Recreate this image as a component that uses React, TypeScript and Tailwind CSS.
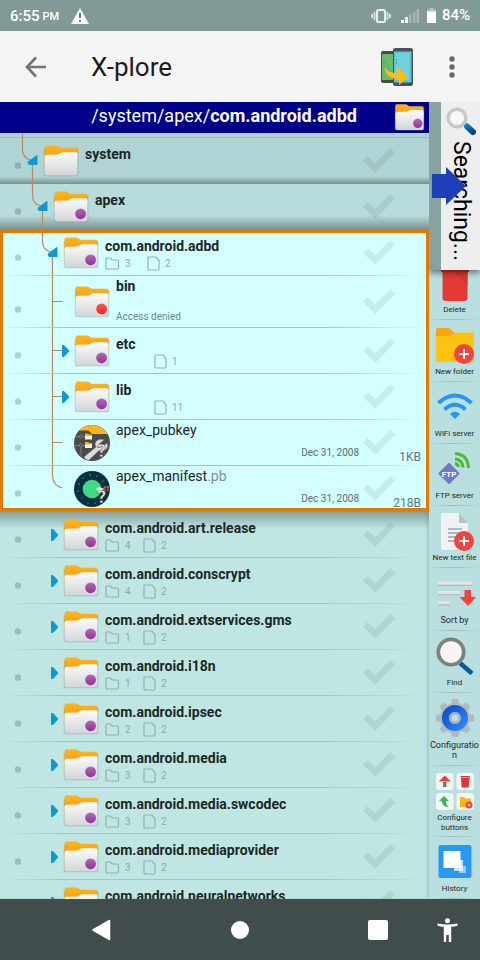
import type { ReactNode } from "react";

type Kind = "folder" | "folderDot" | "folderDenied" | "pubkey" | "manifest";
type Lane = "elbow" | "branch" | "leaf" | "last" | "collapsed";

interface Entry {
  name: string;
  ext?: string;
  kind: Kind;
  lane: Lane;
  level: 0 | 1 | 2 | 3;
  dirs?: number;
  files?: number;
  note?: string;
  date?: string;
  size?: string;
  tall?: boolean;
  opened?: boolean;
}

const LANE_WIDTH = [43, 53, 63, 74];
const WIRE = "#b58a68";
const BLUE = "#0a9bd0";

const parents: Entry[] = [
  { name: "system", kind: "folder", lane: "elbow", level: 0, opened: true },
  { name: "apex", kind: "folderDot", lane: "elbow", level: 1, opened: true },
];

const current: Entry[] = [
  { name: "com.android.adbd", kind: "folderDot", lane: "elbow", level: 2, dirs: 3, files: 2, opened: true },
  { name: "bin", kind: "folderDenied", lane: "leaf", level: 3, note: "Access denied", tall: true },
  { name: "etc", kind: "folderDot", lane: "branch", level: 3, files: 1 },
  { name: "lib", kind: "folderDot", lane: "branch", level: 3, files: 11 },
  { name: "apex_pubkey", kind: "pubkey", lane: "leaf", level: 3, date: "Dec 31, 2008", size: "1KB" },
  { name: "apex_manifest", ext: ".pb", kind: "manifest", lane: "last", level: 3, date: "Dec 31, 2008", size: "218B" },
];

const siblings: Entry[] = [
  ["com.android.art.release", 4],
  ["com.android.conscrypt", 4],
  ["com.android.extservices.gms", 1],
  ["com.android.i18n", 1],
  ["com.android.ipsec", 2],
  ["com.android.media", 3],
  ["com.android.media.swcodec", 3],
  ["com.android.mediaprovider", 3],
  ["com.android.neuralnetworks", 4],
].map(([name, dirs]) => ({
  name: name as string,
  dirs: dirs as number,
  files: 2,
  kind: "folderDot" as Kind,
  lane: "collapsed" as Lane,
  level: 2 as const,
}));

function Gradients() {
  return (
    <svg width="0" height="0" className="absolute" aria-hidden="true">
      <defs>
        <linearGradient id="tab" x1="0" y1="0" x2="0" y2="1">
          <stop offset="0" stopColor="#fdb515" />
          <stop offset="1" stopColor="#f8931f" />
        </linearGradient>
        <linearGradient id="paper" x1="0" y1="0" x2="0" y2="1">
          <stop offset="0" stopColor="#fbfbfb" />
          <stop offset="1" stopColor="#d3d5d7" />
        </linearGradient>
        <linearGradient id="purple" x1="0" y1="0" x2="0" y2="1">
          <stop offset="0" stopColor="#b868b4" />
          <stop offset="1" stopColor="#8e3299" />
        </linearGradient>
        <linearGradient id="red" x1="0" y1="0" x2="0" y2="1">
          <stop offset="0" stopColor="#ff5a55" />
          <stop offset="1" stopColor="#fb1d1d" />
        </linearGradient>
        <linearGradient id="handle" x1="0" y1="0" x2="1" y2="1">
          <stop offset="0" stopColor="#0d7cc0" />
          <stop offset="1" stopColor="#0a3f7c" />
        </linearGradient>
        <linearGradient id="gearBlue" x1="0" y1="0" x2="1" y2="1">
          <stop offset="0" stopColor="#0a4fd0" />
          <stop offset="1" stopColor="#2b86f5" />
        </linearGradient>
      </defs>
    </svg>
  );
}

function FolderIcon({ dot, className = "size-9" }: { dot?: "purple" | "red"; className?: string }) {
  return (
    <svg viewBox="0 0 36 36" className={`shrink-0 ${className}`} aria-hidden="true">
      <path d="M.8 6h34.500v25q0 2.300-2.300 2.300H3.200Q.8 33.300.8 31z" fill="#5d7f80" opacity=".4" />
      <path d="M1.500 4.500Q1.500 2.500 3.500 2.500H13q1.500 0 2.500 1T18 4.800H32.500Q34.500 4.800 34.500 6.800V20H1.500z" fill="url(#tab)" />
      <path d="M1.500 14q0-2.200 2.500-2.300l10.500-.3q1.500-.2 2.500-1.200t2.500-1H32.500q2 0 2 2V30.500q0 2-2 2h-29q-2 0-2-2z" fill="url(#paper)" />
      {dot && <circle cx="27.600" cy="24.800" r="5.400" fill={`url(#${dot})`} />}
    </svg>
  );
}

function Question() {
  return (
    <text x="27.500" y="31.500" fontFamily="Roboto, sans-serif" fontWeight="700" fontSize="18" textAnchor="middle" fill="#e8eaea" stroke="#444" strokeWidth=".5">
      ?
    </text>
  );
}

function PubkeyIcon() {
  return (
    <svg viewBox="0 0 36 36" className="size-9 shrink-0" aria-hidden="true">
      <circle cx="18" cy="18" r="18" fill="#4b4b4d" />
      <path d="M4.500 6A18 18 0 0 1 33.500 9H18L14.500 5.500H5z" fill="#fdb515" />
      <g fill="none" stroke="#8c8c8c" strokeWidth=".8">
        <circle cx="7" cy="11.500" r="1.600" />
        <circle cx="7" cy="20.500" r="1.600" />
        <path d="M1 11.500h4M9 11.500h3M1 20.500h4M9 20.500h3M7 23v8" />
      </g>
      <path d="M11 9h3l1 1h3v4.500h-7zM11 17.500h3l1 1h3V23h-7z" fill="#fdf3e0" />
      <path d="M11 8.500h3l1 1h3V11h-7zM11 17h3l1 1h3v1.500h-7z" fill="#fdb515" />
      <path d="M10 32 22 22q-2.500-5 2-7 3-1.500 6 0l-5 4 1.500 2.500 3-.5 3.500-3q2 5-2 7t-6 .5L14.500 35.500q-3-.5-4.500-3.500z" fill="#dcdcdc" stroke="#77797a" strokeWidth=".5" />
      <Question />
    </svg>
  );
}

function ManifestIcon() {
  return (
    <svg viewBox="0 0 36 36" className="size-9 shrink-0" aria-hidden="true">
      <circle cx="18" cy="18" r="18" fill="#0a3042" />
      <g fill="#b9d8da">
        <circle cx="9" cy="7" r=".5" /><circle cx="16" cy="4" r=".6" /><circle cx="23" cy="5" r=".5" />
        <circle cx="29" cy="10" r=".5" /><circle cx="5" cy="13" r=".6" /><circle cx="4" cy="20" r=".6" />
        <circle cx="8" cy="27" r=".5" /><circle cx="14" cy="32" r=".5" /><circle cx="21" cy="32" r=".5" />
      </g>
      <circle cx="18" cy="18" r="9.300" fill="#3ddc84" />
      <path d="M29.500 16.500l1.500-1v5M32.500 16.500l1.500-1v5" stroke="#f0592a" strokeWidth="1.200" fill="none" />
      <path d="M22 17.500q3-2 5-1 1 1 3 1-1 3-3.500 4-3-.5-4.500-4z" fill="#e8eaea" />
      <Question />
    </svg>
  );
}

function EntryIcon({ kind }: { kind: Kind }) {
  if (kind === "pubkey") return <PubkeyIcon />;
  if (kind === "manifest") return <ManifestIcon />;
  if (kind === "folder") return <FolderIcon />;
  return <FolderIcon dot={kind === "folderDenied" ? "red" : "purple"} />;
}

/* Left lane of a row: the selection dot and this row's piece of the tree wiring. */
function TreeLane({ entry }: { entry: Entry }) {
  const width = LANE_WIDTH[entry.level];
  const height = entry.tall ? 52 : 46;
  const x = 22.5 + entry.level * 10;
  const tick = entry.tall ? 25.5 : 22.5;
  return (
    <svg width={width} height={height} className="shrink-0" aria-hidden="true">
      <circle cx="18" cy={entry.tall ? 33.5 : 27.500} r="3.200" fill="#000" fillOpacity=".18" />
      <g fill="none" stroke={WIRE} strokeWidth="1.200">
        {entry.lane === "elbow" && (
          <path d={`M${x} 0V11Q${x} 20 ${x + 8} 22M${x + 10} 24V46`} />
        )}
        {(entry.lane === "branch" || entry.lane === "leaf") && (
          <path d={`M52.500 0V${height}M52.500 ${tick}H62.500`} />
        )}
        {entry.lane === "last" && <path d="M52.500 0V10Q53 20 62.500 22" />}
      </g>
      {entry.lane === "elbow" && (
        <path d={`M${x + 14.500} 17.500V26.500H${x + 6.500}L${x + 5.500} 24z`} fill={BLUE} stroke={BLUE} strokeLinejoin="round" />
      )}
      {entry.lane === "branch" && <path d="M62.500 17.500H64L69 23 64 28.500H62.500z" fill={BLUE} stroke={BLUE} strokeLinejoin="round" />}
      {entry.lane === "collapsed" && <path d="M51.500 17.500H53L58 23 53 28.500H51.500z" fill={BLUE} stroke={BLUE} strokeLinejoin="round" />}
    </svg>
  );
}

function Counts({ entry }: { entry: Entry }) {
  return (
    <div className="flex h-[15px] items-center text-[10px] text-[#8fa9aa]">
      {entry.dirs !== undefined && (
        <>
          <svg width="15" height="13" viewBox="0 0 15 13" aria-hidden="true">
            <path d="M1 11V2q0-1 1-1h3.500l1.500 2h5.500q1 0 1 1v7q0 1-1 1H2q-1 0-1-1z" fill="none" stroke="#94b0b1" strokeWidth="1.200" />
          </svg>
          <span className={entry.opened ? "ml-[5px] w-[22px]" : "ml-[5px] w-[18px]"}>{entry.dirs}</span>
        </>
      )}
      {entry.files !== undefined && (
        <>
          <svg width="13" height="15" viewBox="0 0 13 15" className={entry.dirs === undefined ? "ml-[38px]" : ""} aria-hidden="true">
            <path d="M1 12.500V2q0-1 1-1h7l3 3.500v8q0 1.500-1 1.500H2q-1 0-1-1.500z" fill="none" stroke="#94b0b1" strokeWidth="1.200" />
          </svg>
          <span className="ml-[5px]">{entry.files}</span>
        </>
      )}
    </div>
  );
}

function Row({ entry, shade }: { entry: Entry; shade?: string }) {
  const isFile = entry.date !== undefined;
  const high = isFile || entry.tall;
  return (
    <li className={`flex flex-col ${entry.tall ? "h-[52px]" : "h-[46px]"} ${shade ?? ""}`}>
      <div className="flex min-h-0 flex-1 overflow-hidden">
        <TreeLane entry={entry} />
        <div className={entry.tall ? "pt-2" : "pt-[5px]"}>
          <EntryIcon kind={entry.kind} />
        </div>
        <div className={`ml-1.5 min-w-0 flex-1 whitespace-nowrap ${high ? "" : "pt-1.5"}`}>
          <div className={`text-sm leading-5 text-[#1d2626] ${isFile ? "" : "font-bold"}`}>
            {entry.name}
            {entry.ext && <span className="text-[#7a9292]">{entry.ext}</span>}
          </div>
          {entry.note && <div className="pt-3.5 text-[10px] leading-[14px] text-[#6c8787]">{entry.note}</div>}
          {(entry.dirs !== undefined || entry.files !== undefined) && <Counts entry={entry} />}
        </div>
        {isFile && <div className="pt-[26px] text-[10px] leading-[14px] text-[#587070]">{entry.date}</div>}
        <input
          type="checkbox"
          aria-label={`Select ${entry.name}`}
          className={`ml-1 h-[25px] w-8 shrink-0 appearance-none bg-black/7 checked:bg-black/50 [clip-path:polygon(0_51%,14%_32%,38%_61%,85%_0,100%_19%,38%_100%)] ${entry.tall ? "mt-[13px]" : "mt-2.5"}`}
        />
        <div className="flex w-[34px] shrink-0 justify-end pt-[29px] pr-2 text-[12px] leading-4 text-[#5f7878]">{entry.size}</div>
      </div>
      {!shade && <div className="h-px shrink-0 bg-[linear-gradient(to_right,transparent,#a9c3c5_15%,#a9c3c5_75%,transparent)]" />}
    </li>
  );
}

function Magnifier({ className }: { className: string }) {
  return (
    <svg viewBox="0 0 40 40" className={className} aria-hidden="true">
      <path d="M25 27 37 37.500" stroke="#0b5c9c" strokeWidth="4.500" />
      <circle cx="16" cy="16" r="12.700" fill="#f5f5f5" stroke="#808080" strokeWidth="3.800" />
    </svg>
  );
}

function Plus({ x, y, r }: { x: number; y: number; r: number }) {
  return (
    <g>
      <circle cx={x} cy={y} r={r} fill="#f4433c" />
      <path d={`M${x - r * 0.5} ${y}h${r}M${x} ${y - r * 0.5}v${r}`} stroke="#fff" strokeWidth={r / 5} />
    </g>
  );
}

const GEAR_TEETH = [0, 45, 90, 135, 180, 225, 270, 315];

const tools: { label: string; big?: boolean; height: string; art: ReactNode }[] = [
  {
    label: "New folder", height: "h-[62px]",
    art: (
      <>
        <path d="M1 5q0-2 2-2h11l6 5H37q2 0 2 2V20H1z" fill="#fca311" />
        <path d="M1 12q0-1 2-1h11l7-3.500H37q2 0 2 2V35q0 2-2 2H3q-2 0-2-2z" fill="#fdc313" />
        <Plus x={29} y={29} r={10} />
      </>
    ),
  },
  {
    label: "WiFi server", height: "h-[62px]",
    art: (
      <g fill="none" stroke="#2796f3" strokeWidth="4">
        <path d="M3.500 16Q20 1 36.500 16" />
        <path d="M9.500 22.500Q20 13 30.500 22.500" />
        <path d="M15 27Q20 22.500 25 27L20 32z" fill="#2796f3" stroke="none" />
      </g>
    ),
  },
  {
    label: "FTP server", height: "h-[62px]",
    art: (
      <>
        <path d="M14 15 23.500 24.500 14 34 4.500 24.500z" fill="#7079cb" stroke="#7079cb" strokeWidth="2" strokeLinejoin="round" />
        <text x="14" y="27.500" fontSize="8" fontWeight="700" textAnchor="middle" fill="#fff" fontFamily="Roboto, sans-serif">FTP</text>
        <g fill="none" stroke="#4fba2b" strokeWidth="3">
          <path d="M20 4.500Q33 5.500 33.500 19" />
          <path d="M20 10Q27.500 10.500 28 18.500" />
          <path d="M20 14.500Q23 15 23.500 18" />
        </g>
      </>
    ),
  },
  {
    label: "New text file", height: "h-[62px]",
    art: (
      <>
        <path d="M6 4q0-2 2-2h16l9 10v25q0 2-2 2H8q-2 0-2-2z" fill="#f0f1f2" />
        <path d="M24 2l9 10h-9z" fill="#b8c2c6" />
        <path d="M13 18h14M13 22h14M13 26h10M13 30h8" stroke="#9ba4a8" strokeWidth="1.500" />
        <Plus x={29} y={30} r={10} />
      </>
    ),
  },
  {
    label: "Sort by", big: true, height: "h-[63px]",
    art: (
      <>
        <path d="M3 10.500h34M3 20h22M3 30h11" stroke="#a9b4b5" strokeWidth="4.500" />
        <path d="M3 10h34M3 19.500h22M3 29.500h11" stroke="#e3e5e6" strokeWidth="3.500" />
        <path d="M29.500 17h6.500v7h5L33 33l-8.500-9h5z" fill="#f4433c" />
      </>
    ),
  },
  { label: "Find", height: "h-[62px]", art: null },
  {
    label: "Configuration", big: true, height: "h-[73px]",
    art: (
      <>
        {GEAR_TEETH.map((a) => (
          <path key={a} d="M17 1h6l1.500 7h-9z" fill="#b3b8bb" transform={`rotate(${a} 20 20)`} />
        ))}
        <circle cx="20" cy="20" r="15" fill="#b3b8bb" />
        <circle cx="20" cy="20" r="9.500" fill="none" stroke="url(#gearBlue)" strokeWidth="7" />
        <circle cx="20" cy="20" r="4.800" fill="#b9dfde" stroke="#a3aeb6" strokeWidth="2.500" />
      </>
    ),
  },
  {
    label: "Configure buttons", height: "h-[71px]",
    art: (
      <>
        {[[1, 2], [21.500, 2], [1, 22], [21.500, 22]].map(([x, y]) => (
          <rect key={`${x}-${y}`} x={x} y={y} width="17.500" height="17" rx="3" fill="#f3f4f4" />
        ))}
        <path d="M9.800 4.500l6 6h-12z" fill="#e84040" />
        <path d="M8 11h3.500v5H8z" fill="#777" />
        <path d="M26 7h8.500l-.8 9.500h-7zM25.500 5h9.500v1.500h-9.500z" fill="#dc3737" />
        <path d="M9 25l5 5h-3q0 5 3 6-7 0-7-6H4z" fill="#3fb256" />
        <path d="M25 26h4l1.500 1.500H36V36H25z" fill="#fdb515" />
        <Plus x={34} y={34} r={3.500} />
      </>
    ),
  },
  {
    label: "History", height: "h-[62px]",
    art: (
      <>
        <rect x="3.500" y="3" width="33" height="33" rx="2" fill="#2898f2" />
        <rect x="19" y="18" width="9" height="11" fill="#fff" opacity=".75" />
        <rect x="24" y="24" width="7" height="7" fill="#fff" opacity=".5" />
        <rect x="8.500" y="9" width="17" height="17" fill="#fff" />
      </>
    ),
  },
];

function Divider() {
  return <div className="h-px w-full shrink-0 bg-linear-to-r from-transparent via-[#9fbcbc] to-transparent" />;
}

function Sidebar() {
  return (
    <aside className="flex w-[51px] shrink-0 flex-col overflow-hidden bg-[#b9dfde]">
      <div className="relative flex h-[168px] shrink-0 bg-[#88a2a1] pl-3 shadow-[0_3px_6px_rgba(0,0,0,0.45)]">
        <div className="flex flex-1 flex-col items-center bg-[#eeeeee]">
          <svg viewBox="0 0 32 32" className="mt-1 size-8 shrink-0" aria-hidden="true">
            <path d="M22 20.500l6 5.500" stroke="url(#handle)" strokeWidth="6" strokeLinecap="round" />
            <circle cx="12" cy="12" r="8.800" fill="#f7f7f7" stroke="#c6c8c9" strokeWidth="3.500" />
          </svg>
          <span className="mt-[3px] text-[23px] leading-7 text-black [writing-mode:vertical-rl]">Searching...</span>
        </div>
        <svg viewBox="0 0 36 40" className="absolute top-16 left-0.5 h-10 w-9" aria-hidden="true">
          <path d="M1 8H15V1L35 20 15 39V32H1z" fill="#1e3fba" />
        </svg>
      </div>
      <button type="button" className="flex h-[49px] shrink-0 flex-col items-center">
        <svg width="28" height="31" viewBox="0 0 28 31" aria-hidden="true">
          <path d="M0 0h28v2H0z" fill="#c93030" />
          <path d="M1.500 2h25v26q0 3-3 3h-19q-3 0-3-3z" fill="#e53935" />
          <path d="M1.500 2h11l14 14V2z" fill="#d93531" />
        </svg>
        <span className="mt-1 text-[8px] leading-[10px] text-[#1d2a2a]">Delete</span>
      </button>
      <Divider />
      {tools.map((tool) => (
        <div key={tool.label} className={`flex shrink-0 flex-col ${tool.height}`}>
          <button type="button" className="flex flex-1 flex-col items-center pt-[5px]">
            {tool.art ? (
              <svg viewBox="0 0 40 40" className="size-10 shrink-0 overflow-visible" aria-hidden="true">{tool.art}</svg>
            ) : (
              <Magnifier className="size-10 shrink-0" />
            )}
            <span className={`w-full pt-0.5 text-center leading-[10px] break-all text-[#1d2a2a] ${tool.big ? "text-[9px]" : "text-[8px]"}`}>
              {tool.label === "Configure buttons" ? <>Configure<br />buttons</> : tool.label}
            </span>
          </button>
          <Divider />
        </div>
      ))}
    </aside>
  );
}

function StatusBar() {
  return (
    <div className="flex h-[31px] shrink-0 items-center bg-[#819a98] pr-2.5 pl-2.5 text-[15px] font-medium text-white">
      <span className="pt-0.5">6:55</span>
      <span className="ml-[3px] pt-1 text-[11px]">PM</span>
      <svg width="18" height="16" viewBox="0 0 18 16" className="ml-3" aria-hidden="true">
        <path d="M9 0 18 16H0z" fill="#fff" />
        <path d="M9 5v5M9 12v2" stroke="#657f7d" strokeWidth="2" />
      </svg>
      <svg width="20" height="14" viewBox="0 0 20 14" className="ml-auto" aria-hidden="true">
        <rect x="6" y="1" width="8" height="12" rx="1.500" fill="none" stroke="#e8eeed" strokeWidth="2" />
        <path d="M3.500 3v8M1 5v4M16.500 3v8M19 5v4" stroke="#d5dfde" strokeWidth="2" />
      </svg>
      <svg width="18" height="14" viewBox="0 0 18 14" className="ml-2.5" aria-hidden="true">
        <path d="M0 11h3v3H0zM4 8h3v6H4z" fill="#fff" />
        <path d="M8 5.500h2.500V14H8zM12 3h2.500v11H12zM15.500 0H18v14h-2.500z" fill="#a4b6b5" />
      </svg>
      <svg width="9" height="15" viewBox="0 0 10 15" preserveAspectRatio="none" className="ml-2" aria-hidden="true">
        <path d="M3 0h4v1.500h3V4H0V1.500h3z" fill="#b5c4c3" />
        <path d="M0 3.500h10V15H0z" fill="#fff" />
      </svg>
      <span className="ml-1.5 text-[15px]">84%</span>
    </div>
  );
}

function AppBar() {
  return (
    <header className="flex h-[71px] shrink-0 items-center bg-[#f4f4f4] pr-[15px] pl-[25px]">
      <button type="button" aria-label="Back">
        <svg width="22" height="22" viewBox="0 0 22 22" className="block" aria-hidden="true">
          <path d="M11 1.500 2 11l9 9.500M2 11H21" fill="none" stroke="#747474" strokeWidth="2.600" />
        </svg>
      </button>
      <h1 className="ml-11 pt-0.5 text-[26px] text-[#1c1c1c]">X-plore</h1>
      <button type="button" aria-label="Transfer between devices" className="ml-auto">
        <svg width="34" height="40" viewBox="0 0 34 40" className="block" aria-hidden="true">
          <rect x="1" y="4" width="17" height="32" rx="2" fill="#474b4e" />
          <rect x="2" y="7" width="13" height="26" fill="#68bb6a" />
          <rect x="13" y="1" width="20" height="38" rx="2.500" fill="#4b5154" />
          <rect x="14" y="4.500" width="17.500" height="31" fill="#55c9da" />
          <path d="M15.500 6h14L29 33H15.500z" fill="#74d0dc" />
          <path d="M4 13v1.500M4 16v1.500M16.500 12v1.500M16.500 15v1.500" stroke="#3a8a70" />
          <path d="M4.500 20.500Q9 26 18 26V20.500L28 30 19 38V32Q6 32 4.500 20.500z" fill="#ffbe0b" />
        </svg>
      </button>
      <button type="button" aria-label="More options" className="ml-[35px]">
        <svg width="6" height="22" viewBox="0 0 6 22" className="block" aria-hidden="true">
          <circle cx="3" cy="3" r="2.700" fill="#696969" />
          <circle cx="3" cy="11" r="2.700" fill="#696969" />
          <circle cx="3" cy="19" r="2.700" fill="#696969" />
        </svg>
      </button>
      <span className="w-2.5" />
    </header>
  );
}

function NavBar() {
  return (
    <nav className="flex h-[61px] shrink-0 items-center justify-end bg-[#404d4c] pr-[22px]">
      <button type="button" aria-label="Back">
        <svg width="20" height="22" viewBox="0 0 20 22" className="block" aria-hidden="true">
          <path d="M18.500 1.500v19L2 11z" fill="#fff" stroke="#fff" strokeWidth="1.500" strokeLinejoin="round" />
        </svg>
      </button>
      <button type="button" aria-label="Home" className="ml-[120px] size-[18px] rounded-full bg-white" />
      <button type="button" aria-label="Recent apps" className="ml-[119px] size-5 rounded-xs bg-white" />
      <button type="button" aria-label="Accessibility" className="ml-[49px]">
        <svg width="21" height="24" viewBox="0 0 21 24" className="block" aria-hidden="true">
          <circle cx="10.500" cy="2.800" r="2.500" fill="#fff" />
          <path d="M.5 5.500q10 2 20 0v2.300q-3 .8-6.300 1V24h-2.400v-7h-2.600v7H6.800V8.800q-3.300-.2-6.300-1z" fill="#fff" />
        </svg>
      </button>
    </nav>
  );
}

export default function App() {
  return (
    <div className="flex h-screen flex-col overflow-hidden font-['Roboto',sans-serif]">
      <Gradients />
      <StatusBar />
      <AppBar />
      <div className="flex min-h-0 flex-1">
        <main className="relative flex min-w-0 flex-1 flex-col overflow-hidden bg-[#c0e6e4]">
          <div className="flex h-[31px] shrink-0 items-center justify-end bg-[#000088] pr-1 text-[18px] text-white">
            <span className="mr-[37px] pb-1">
              /system/apex/<b>com.android.adbd</b>
            </span>
            <FolderIcon dot="purple" className="size-[31px]" />
          </div>
          <div className="h-[5px] shrink-0 border-b border-[#9fbdbd] bg-[#b0d4d3]">
            <svg width="43" height="5" className="block" aria-hidden="true">
              <path d="M22.500 0V5" stroke={WIRE} strokeWidth="1.200" />
            </svg>
          </div>
          <ul className="shrink-0">
            <Row entry={parents[0]} shade="bg-linear-to-b from-[#b0d4d3] from-84% to-[#78908f]" />
            <Row entry={parents[1]} shade="bg-linear-to-b from-[#b8dcdc] from-68% to-[#78908f]" />
          </ul>
          <ul className="relative mb-px h-[281px] shrink-0 overflow-hidden bg-[#d4ffff]">
            {current.map((entry) => (
              <Row key={entry.name} entry={entry} />
            ))}
            <li aria-hidden="true" className="pointer-events-none absolute inset-0 border-3 border-[#e07b00]" />
          </ul>
          <ul className="-mt-px min-h-0 flex-1 overflow-hidden bg-linear-to-b from-[#829d9c] to-transparent to-[18px] pt-px shadow-[inset_-2px_0_3px_rgba(80,110,110,0.25)]">
            {siblings.map((entry) => (
              <Row key={entry.name} entry={entry} />
            ))}
          </ul>
        </main>
        <Sidebar />
      </div>
      <NavBar />
    </div>
  );
}
